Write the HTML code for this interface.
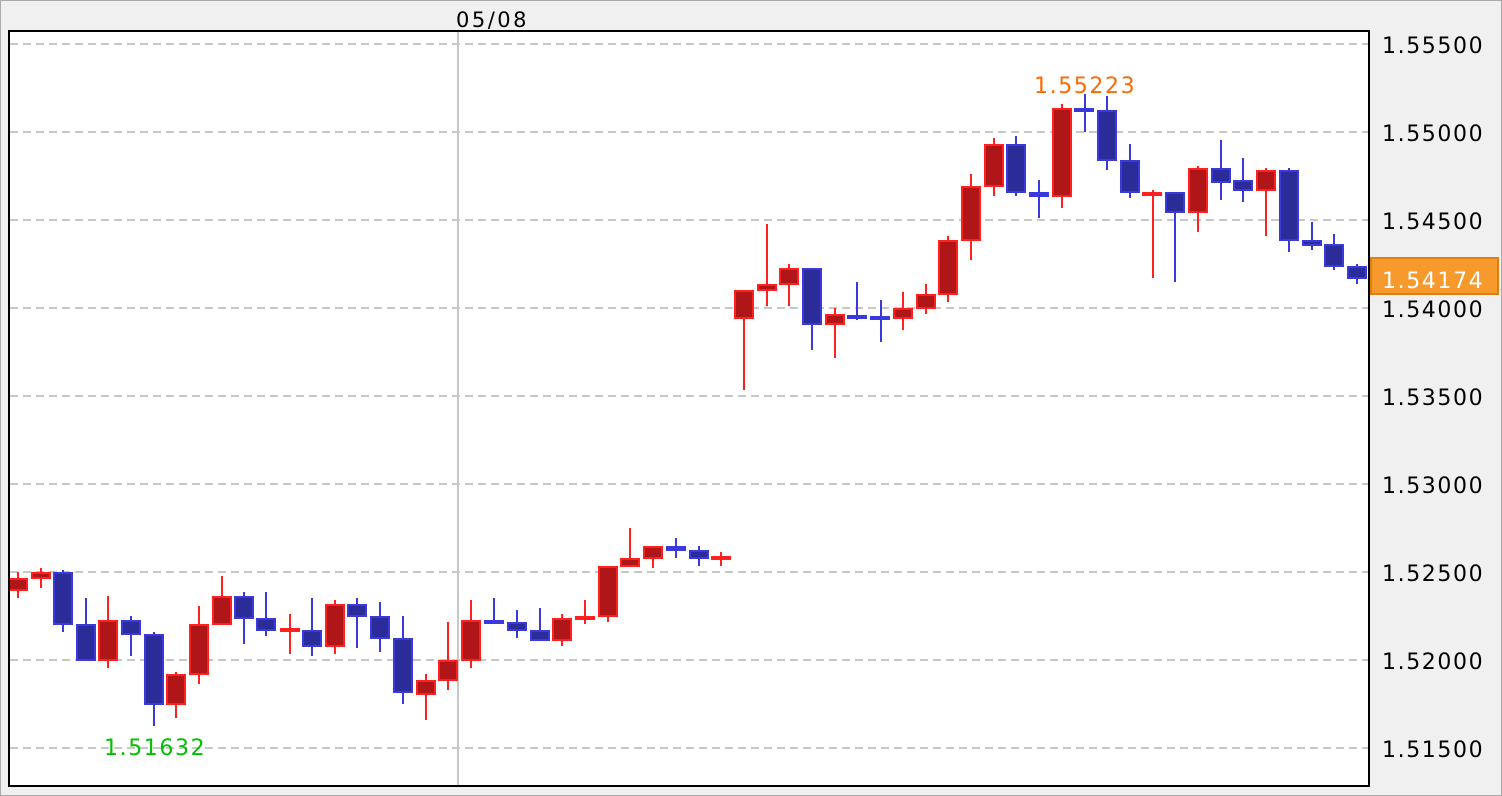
<!DOCTYPE html><html><head><style>body{margin:0;background:#f0f0f0}svg{display:block}text{font-family:"DejaVu Sans","Liberation Sans",sans-serif}</style></head><body>
<svg width="1502" height="796" xmlns="http://www.w3.org/2000/svg">
<rect x="0.5" y="0.5" width="1501" height="795" fill="#f0f0f0" stroke="#aaa"/>
<rect x="9" y="31" width="1360" height="755" fill="#fff" stroke="#000" stroke-width="2"/>
<g stroke="#c8c8c8" stroke-width="2" stroke-dasharray="8,5">
<line x1="10" x2="1368" y1="44" y2="44"/><line x1="10" x2="1368" y1="132" y2="132"/><line x1="10" x2="1368" y1="220" y2="220"/><line x1="10" x2="1368" y1="308" y2="308"/><line x1="10" x2="1368" y1="396" y2="396"/><line x1="10" x2="1368" y1="484" y2="484"/><line x1="10" x2="1368" y1="572" y2="572"/><line x1="10" x2="1368" y1="660" y2="660"/><line x1="10" x2="1368" y1="748" y2="748"/>
</g>
<line x1="458" x2="458" y1="32" y2="785" stroke="#c8c8c8" stroke-width="2"/>
<text x="456" y="27" font-size="21" letter-spacing="2.5" fill="#000">05/08</text>
<g font-size="22" fill="#000" letter-spacing="1.6">
<text x="1382" y="53">1.55500</text><text x="1382" y="141">1.55000</text><text x="1382" y="229">1.54500</text><text x="1382" y="317">1.54000</text><text x="1382" y="405">1.53500</text><text x="1382" y="493">1.53000</text><text x="1382" y="581">1.52500</text><text x="1382" y="669">1.52000</text><text x="1382" y="757">1.51500</text>
</g>
<rect x="1371" y="258" width="127" height="36" fill="#f79a2e" stroke="#e07f10" stroke-width="2"/>
<text x="1382" y="288" font-size="22" fill="#fff" letter-spacing="1.6">1.54174</text>
<text x="1034" y="93" font-size="22" fill="#ff6a00" letter-spacing="1.6">1.55223</text>
<text x="104" y="755" font-size="22" fill="#00c000" letter-spacing="1.6">1.51632</text>
<svg x="10" y="32" width="1358" height="753" viewBox="10 32 1358 753" overflow="hidden">
<g>
<rect x="17" y="572" width="2" height="26" fill="#ff2020"/><rect x="9" y="579" width="18" height="11" fill="#b01518" stroke="#ff2020" stroke-width="2"/>
<rect x="40" y="568" width="2" height="20" fill="#ff2020"/><rect x="32" y="573" width="18" height="5" fill="#b01518" stroke="#ff2020" stroke-width="2"/>
<rect x="62" y="570" width="2" height="62" fill="#3a3adc"/><rect x="54" y="573" width="18" height="51" fill="#2b2b9a" stroke="#3a3adc" stroke-width="2"/>
<rect x="85" y="598" width="2" height="63" fill="#3a3adc"/><rect x="77" y="625" width="18" height="35" fill="#2b2b9a" stroke="#3a3adc" stroke-width="2"/>
<rect x="107" y="596" width="2" height="72" fill="#ff2020"/><rect x="99" y="621" width="18" height="39" fill="#b01518" stroke="#ff2020" stroke-width="2"/>
<rect x="130" y="616" width="2" height="40" fill="#3a3adc"/><rect x="122" y="621" width="18" height="13" fill="#2b2b9a" stroke="#3a3adc" stroke-width="2"/>
<rect x="153" y="632" width="2" height="94" fill="#3a3adc"/><rect x="145" y="635" width="18" height="69" fill="#2b2b9a" stroke="#3a3adc" stroke-width="2"/>
<rect x="175" y="672" width="2" height="46" fill="#ff2020"/><rect x="167" y="675" width="18" height="29" fill="#b01518" stroke="#ff2020" stroke-width="2"/>
<rect x="198" y="606" width="2" height="78" fill="#ff2020"/><rect x="190" y="625" width="18" height="49" fill="#b01518" stroke="#ff2020" stroke-width="2"/>
<rect x="221" y="576" width="2" height="49" fill="#ff2020"/><rect x="213" y="597" width="18" height="27" fill="#b01518" stroke="#ff2020" stroke-width="2"/>
<rect x="243" y="592" width="2" height="52" fill="#3a3adc"/><rect x="235" y="597" width="18" height="21" fill="#2b2b9a" stroke="#3a3adc" stroke-width="2"/>
<rect x="265" y="592" width="2" height="44" fill="#3a3adc"/><rect x="257" y="619" width="18" height="11" fill="#2b2b9a" stroke="#3a3adc" stroke-width="2"/>
<rect x="289" y="614" width="2" height="40" fill="#ff2020"/><rect x="280" y="628" width="20" height="4" fill="#ff2020"/>
<rect x="311" y="598" width="2" height="58" fill="#3a3adc"/><rect x="303" y="631" width="18" height="15" fill="#2b2b9a" stroke="#3a3adc" stroke-width="2"/>
<rect x="334" y="600" width="2" height="54" fill="#ff2020"/><rect x="326" y="605" width="18" height="41" fill="#b01518" stroke="#ff2020" stroke-width="2"/>
<rect x="356" y="598" width="2" height="50" fill="#3a3adc"/><rect x="348" y="605" width="18" height="11" fill="#2b2b9a" stroke="#3a3adc" stroke-width="2"/>
<rect x="379" y="602" width="2" height="50" fill="#3a3adc"/><rect x="371" y="617" width="18" height="21" fill="#2b2b9a" stroke="#3a3adc" stroke-width="2"/>
<rect x="402" y="616" width="2" height="88" fill="#3a3adc"/><rect x="394" y="639" width="18" height="53" fill="#2b2b9a" stroke="#3a3adc" stroke-width="2"/>
<rect x="425" y="674" width="2" height="46" fill="#ff2020"/><rect x="417" y="681" width="18" height="13" fill="#b01518" stroke="#ff2020" stroke-width="2"/>
<rect x="447" y="622" width="2" height="68" fill="#ff2020"/><rect x="439" y="661" width="18" height="19" fill="#b01518" stroke="#ff2020" stroke-width="2"/>
<rect x="470" y="600" width="2" height="68" fill="#ff2020"/><rect x="462" y="621" width="18" height="39" fill="#b01518" stroke="#ff2020" stroke-width="2"/>
<rect x="493" y="598" width="2" height="26" fill="#3a3adc"/><rect x="484" y="620" width="20" height="4" fill="#3a3adc"/>
<rect x="516" y="610" width="2" height="28" fill="#3a3adc"/><rect x="508" y="623" width="18" height="7" fill="#2b2b9a" stroke="#3a3adc" stroke-width="2"/>
<rect x="539" y="608" width="2" height="33" fill="#3a3adc"/><rect x="531" y="631" width="18" height="9" fill="#2b2b9a" stroke="#3a3adc" stroke-width="2"/>
<rect x="561" y="614" width="2" height="32" fill="#ff2020"/><rect x="553" y="619" width="18" height="21" fill="#b01518" stroke="#ff2020" stroke-width="2"/>
<rect x="584" y="600" width="2" height="24" fill="#ff2020"/><rect x="575" y="616" width="20" height="4" fill="#ff2020"/>
<rect x="607" y="566" width="2" height="56" fill="#ff2020"/><rect x="599" y="567" width="18" height="49" fill="#b01518" stroke="#ff2020" stroke-width="2"/>
<rect x="629" y="528" width="2" height="39" fill="#ff2020"/><rect x="621" y="559" width="18" height="7" fill="#b01518" stroke="#ff2020" stroke-width="2"/>
<rect x="652" y="546" width="2" height="22" fill="#ff2020"/><rect x="644" y="547" width="18" height="11" fill="#b01518" stroke="#ff2020" stroke-width="2"/>
<rect x="675" y="538" width="2" height="20" fill="#3a3adc"/><rect x="666" y="546" width="20" height="5" fill="#3a3adc"/>
<rect x="698" y="546" width="2" height="20" fill="#3a3adc"/><rect x="690" y="551" width="18" height="7" fill="#2b2b9a" stroke="#3a3adc" stroke-width="2"/>
<rect x="720" y="552" width="2" height="14" fill="#ff2020"/><rect x="711" y="556" width="20" height="4" fill="#ff2020"/>
<rect x="743" y="290" width="2" height="100" fill="#ff2020"/><rect x="735" y="291" width="18" height="27" fill="#b01518" stroke="#ff2020" stroke-width="2"/>
<rect x="766" y="224" width="2" height="82" fill="#ff2020"/><rect x="758" y="285" width="18" height="5" fill="#b01518" stroke="#ff2020" stroke-width="2"/>
<rect x="788" y="264" width="2" height="42" fill="#ff2020"/><rect x="780" y="269" width="18" height="15" fill="#b01518" stroke="#ff2020" stroke-width="2"/>
<rect x="811" y="268" width="2" height="82" fill="#3a3adc"/><rect x="803" y="269" width="18" height="55" fill="#2b2b9a" stroke="#3a3adc" stroke-width="2"/>
<rect x="834" y="308" width="2" height="50" fill="#ff2020"/><rect x="826" y="315" width="18" height="9" fill="#b01518" stroke="#ff2020" stroke-width="2"/>
<rect x="856" y="282" width="2" height="38" fill="#3a3adc"/><rect x="847" y="315" width="20" height="4" fill="#3a3adc"/>
<rect x="880" y="300" width="2" height="42" fill="#3a3adc"/><rect x="870" y="316" width="20" height="4" fill="#3a3adc"/>
<rect x="902" y="292" width="2" height="38" fill="#ff2020"/><rect x="894" y="309" width="18" height="9" fill="#b01518" stroke="#ff2020" stroke-width="2"/>
<rect x="925" y="284" width="2" height="30" fill="#ff2020"/><rect x="917" y="295" width="18" height="13" fill="#b01518" stroke="#ff2020" stroke-width="2"/>
<rect x="947" y="236" width="2" height="66" fill="#ff2020"/><rect x="939" y="241" width="18" height="53" fill="#b01518" stroke="#ff2020" stroke-width="2"/>
<rect x="970" y="174" width="2" height="86" fill="#ff2020"/><rect x="962" y="187" width="18" height="53" fill="#b01518" stroke="#ff2020" stroke-width="2"/>
<rect x="993" y="138" width="2" height="58" fill="#ff2020"/><rect x="985" y="145" width="18" height="41" fill="#b01518" stroke="#ff2020" stroke-width="2"/>
<rect x="1015" y="136" width="2" height="60" fill="#3a3adc"/><rect x="1007" y="145" width="18" height="47" fill="#2b2b9a" stroke="#3a3adc" stroke-width="2"/>
<rect x="1038" y="180" width="2" height="38" fill="#3a3adc"/><rect x="1029" y="192" width="20" height="5" fill="#3a3adc"/>
<rect x="1061" y="104" width="2" height="104" fill="#ff2020"/><rect x="1053" y="109" width="18" height="87" fill="#b01518" stroke="#ff2020" stroke-width="2"/>
<rect x="1084" y="94" width="2" height="38" fill="#3a3adc"/><rect x="1074" y="108" width="20" height="4" fill="#3a3adc"/>
<rect x="1106" y="96" width="2" height="74" fill="#3a3adc"/><rect x="1098" y="111" width="18" height="49" fill="#2b2b9a" stroke="#3a3adc" stroke-width="2"/>
<rect x="1129" y="144" width="2" height="54" fill="#3a3adc"/><rect x="1121" y="161" width="18" height="31" fill="#2b2b9a" stroke="#3a3adc" stroke-width="2"/>
<rect x="1152" y="190" width="2" height="88" fill="#ff2020"/><rect x="1142" y="192" width="20" height="4" fill="#ff2020"/>
<rect x="1174" y="192" width="2" height="90" fill="#3a3adc"/><rect x="1166" y="193" width="18" height="19" fill="#2b2b9a" stroke="#3a3adc" stroke-width="2"/>
<rect x="1197" y="166" width="2" height="66" fill="#ff2020"/><rect x="1189" y="169" width="18" height="43" fill="#b01518" stroke="#ff2020" stroke-width="2"/>
<rect x="1220" y="140" width="2" height="60" fill="#3a3adc"/><rect x="1212" y="169" width="18" height="13" fill="#2b2b9a" stroke="#3a3adc" stroke-width="2"/>
<rect x="1242" y="158" width="2" height="44" fill="#3a3adc"/><rect x="1234" y="181" width="18" height="9" fill="#2b2b9a" stroke="#3a3adc" stroke-width="2"/>
<rect x="1265" y="168" width="2" height="68" fill="#ff2020"/><rect x="1257" y="171" width="18" height="19" fill="#b01518" stroke="#ff2020" stroke-width="2"/>
<rect x="1288" y="168" width="2" height="84" fill="#3a3adc"/><rect x="1280" y="171" width="18" height="69" fill="#2b2b9a" stroke="#3a3adc" stroke-width="2"/>
<rect x="1311" y="222" width="2" height="28" fill="#3a3adc"/><rect x="1303" y="241" width="18" height="4" fill="#2b2b9a" stroke="#3a3adc" stroke-width="2"/>
<rect x="1333" y="234" width="2" height="36" fill="#3a3adc"/><rect x="1325" y="245" width="18" height="21" fill="#2b2b9a" stroke="#3a3adc" stroke-width="2"/>
<rect x="1356" y="264" width="2" height="20" fill="#3a3adc"/><rect x="1348" y="267" width="18" height="11" fill="#2b2b9a" stroke="#3a3adc" stroke-width="2"/>
</g>
</svg>
</svg>
</body></html>
